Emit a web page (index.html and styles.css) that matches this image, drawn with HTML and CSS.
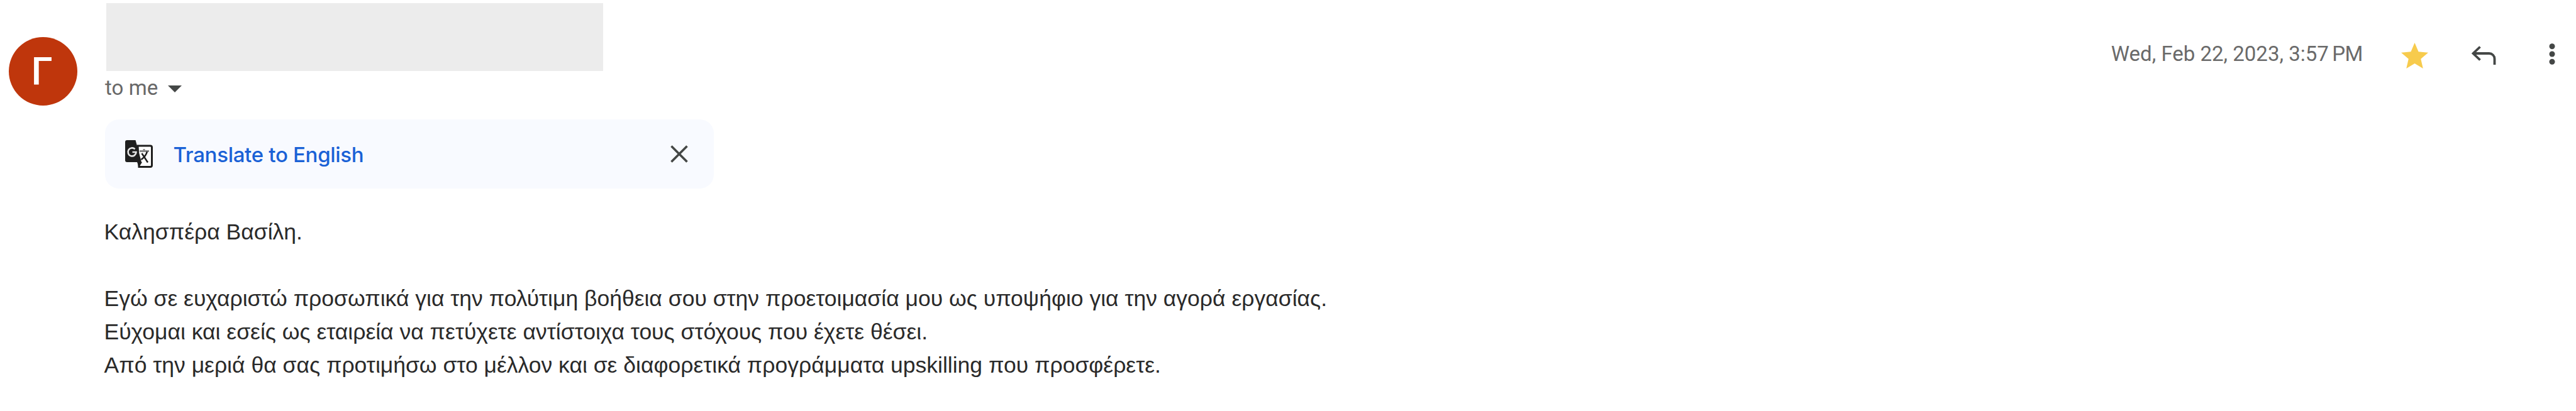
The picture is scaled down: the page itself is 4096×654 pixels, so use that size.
FILE: index.html
```html
<!DOCTYPE html>
<html lang="el">
<head>
<meta charset="utf-8">
<title>Message</title>
<link rel="stylesheet" href="styles.css">
</head>
<body>
<article class="message">
  <div class="avatar">Γ</div>
  <div class="content">
    <div class="sender"></div>
    <div class="recipient">
      <span>to me</span>
      <svg class="caret" viewBox="0 0 22 11"><path d="M0 0h22L11 11z"/></svg>
    </div>
    <div class="translate">
      <svg class="translate-icon" viewBox="0 0 44 44">
        <path d="M20 9h20a2.500 2.500 0 0 1 2.500 2.500v28.500a2.500 2.500 0 0 1-2.500 2.500H22z" fill="#fff" stroke="#1f1f1f" stroke-width="3"/>
        <path d="M3 0h13.500l9.500 35H3a3 3 0 0 1-3-3V3a3 3 0 0 1 3-3z" fill="#1f1f1f"/>
        <path d="M19 35h8l-5 8z" fill="#1f1f1f"/>
        <path d="M11.500 19h6a6.500 6.500 0 1 1-2-4.800" fill="none" stroke="#e6e6e6" stroke-width="2.600"/>
        <path d="M23 17.500h15M30 14v3.500" fill="none" stroke="#8a8a8a" stroke-width="3"/>
        <path d="M35 18c-1.500 6-5.500 10-9.500 13M26.500 21l9.500 14.500" fill="none" stroke="#1f1f1f" stroke-width="2.500"/>
      </svg>
      <span class="translate-label">Translate to English</span>
      <svg class="close" viewBox="0 0 28 28"><path d="M1.500 1.500l25 25M26.500 1.500l-25 25"/></svg>
    </div>
    <div class="body">
      <p>Καλησπέρα Βασίλη.</p>
      <p><br></p>
      <p>Εγώ σε ευχαριστώ προσωπικά για την πολύτιμη βοήθεια σου στην προετοιμασία μου ως υποψήφιο για την αγορά εργασίας.</p>
      <p>Εύχομαι και εσείς ως εταιρεία να πετύχετε αντίστοιχα τους στόχους που έχετε θέσει.</p>
      <p>Από την μεριά θα σας προτιμήσω στο μέλλον και σε διαφορετικά προγράμματα upskilling που προσφέρετε.</p>
    </div>
  </div>
  <div class="meta">
    <span class="date">Wed, Feb 22, 2023, 3:57<span class="period">PM</span></span>
    <svg class="star" viewBox="2 2 20 19"><path d="M12 17.270L18.180 21l-1.640-7.030L22 9.240l-7.190-.610L12 2 9.190 8.630 2 9.240l5.460 4.730L5.820 21z"/></svg>
    <svg class="reply" viewBox="0 0 39 30"><path d="M13.500 1.500L2.500 12l11 10.500M2.500 12H28a8.500 8.500 0 0 1 8.500 8.500V30"/></svg>
    <svg class="more" viewBox="0 0 10 34"><circle cx="5" cy="4.700" r="4.500"/><circle cx="5" cy="17" r="4.500"/><circle cx="5" cy="29.300" r="4.500"/></svg>
  </div>
</article>
</body>
</html>
```
FILE: styles.css
```css
body {
  margin: 0;
  background: #fff;
  overflow: hidden;
}

.message {
  display: flex;
  align-items: flex-start;
  box-sizing: border-box;
  width: 4096px;
  height: 654px;
  padding: 4.700px 33.500px 0 14px;
}

.avatar {
  flex: none;
  box-sizing: border-box;
  width: 109.400px;
  height: 109.800px;
  margin-top: 54px;
  padding-right: 4px;
  border-radius: 50%;
  background: #bf360c;
  color: #fff;
  font: 500 61.500px/111px Roboto, sans-serif;
  text-align: center;
}

.content {
  flex: 1;
  margin-left: 42.100px;
}

.sender {
  width: 789.500px;
  height: 108.800px;
  margin-left: 4px;
  background: #ececec;
}

.recipient {
  display: flex;
  align-items: flex-start;
  box-sizing: border-box;
  height: 76.500px;
  padding: 8px 0 0 1.500px;
  color: #686868;
  font: 33px/38px Roboto, sans-serif;
  letter-spacing: 0.100px;
}

.caret {
  width: 22px;
  height: 11px;
  margin: 14.500px 0 0 15.500px;
  fill: #444746;
}

.translate {
  display: flex;
  align-items: center;
  box-sizing: border-box;
  width: 968.400px;
  height: 109.700px;
  margin-left: 1.500px;
  padding: 0 41px 0 32px;
  border-radius: 22px;
  background: #f8faff;
}

.translate-icon {
  width: 44px;
  height: 44px;
}

.translate-label {
  margin-left: 32.500px;
  padding-top: 3px;
  color: #1a61d6;
  font: 450 33px/40px Inter, sans-serif;
  letter-spacing: -0.300px;
}

.close {
  width: 28px;
  height: 28px;
  margin-left: auto;
  fill: none;
  stroke: #444746;
  stroke-width: 3.600px;
}

.body {
  padding-top: 43px;
  color: #2a2a2a;
  font: 35.500px/53.100px "Liberation Sans", Arial, sans-serif;
}

.body p {
  margin: 0;
  white-space: nowrap;
}

.meta {
  display: flex;
  align-items: flex-start;
  padding-top: 62px;
}

.date {
  margin-right: 61.500px;
  color: #6a6a6a;
  font: 33px/38px Roboto, sans-serif;
  white-space: nowrap;
}

.period {
  margin-left: 5.500px;
  letter-spacing: -0.700px;
}

.star {
  width: 43px;
  height: 41px;
  margin: 1px 68.500px 0 0;
  fill: #f7cb4d;
}

.reply {
  width: 39px;
  height: 30px;
  margin: 6px 84px 0 0;
  fill: none;
  stroke: #444746;
  stroke-width: 3.800px;
}

.more {
  width: 10px;
  height: 34px;
  margin-top: 2.500px;
  fill: #444746;
}
```
